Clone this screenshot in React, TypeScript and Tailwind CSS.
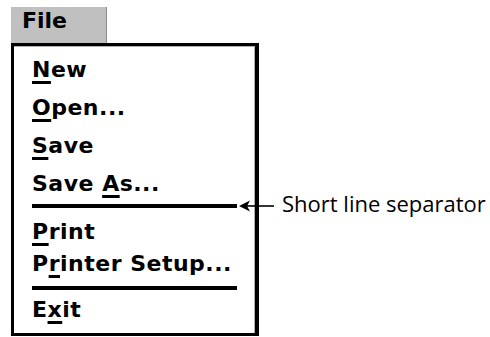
import * as React from "react";

// one menu row; `hot` is the index of the mnemonic letter
function Item({ label, hot, h = "h-[38px]" }: { label: string; hot: number; h?: string }) {
  return (
    <div className={`${h} flex items-center pl-[18px] whitespace-pre`}>
      {label.slice(0, hot)}
      <span className="underline decoration-[3px] underline-offset-[4px]">{label[hot]}</span>
      {label.slice(hot + 1)}
    </div>
  );
}

function Separator({ className = "" }: { className?: string }) {
  return <div className={`ml-[18px] h-[4px] w-[205px] bg-black ${className}`} />;
}

export default function App() {
  return (
    <div className="relative h-[337px] w-[490px] overflow-hidden bg-white text-black">
      {/* title tab */}
      <div
        className="ml-[11px] mt-[7px] h-[36px] w-[96px] border-r border-[#8a8a8a] bg-[#c0c0c0] pl-[11px] pt-[3px] text-[22px] font-bold leading-[22px]"
        style={{ fontFamily: '"DejaVu Sans", sans-serif' }}
      >
        File
      </div>

      {/* dropdown */}
      <div
        className="ml-[11px] flex h-[293px] w-[248px] flex-col border-[3px] border-r-[4px] border-black text-[22px] font-bold leading-none tracking-[0.5px] shadow-[inset_-1px_1px_0_#b0b0b0]"
        style={{ fontFamily: '"DejaVu Sans", sans-serif' }}
      >
        <div className="pt-[5px]">
          <Item label="New" hot={0} />
          <Item label="Open..." hot={0} />
          <Item label="Save" hot={0} />
          <Item label="Save As..." hot={5} />
        </div>
        <Separator className="mt-[1px]" />
        <div className="pt-[8px]">
          <Item label="Print" hot={0} h="h-[32px]" />
          <Item label="Printer Setup..." hot={1} h="h-[32px]" />
        </div>
        <Separator className="mt-[6px]" />
        <div className="pt-[4px]">
          <Item label="Exit" hot={1} h="h-[32px]" />
        </div>
      </div>

      {/* callout */}
      <svg className="absolute left-[238px] top-[198px]" width="40" height="16" viewBox="0 0 40 16">
        <path d="M1 8 L12 2.5 L9 8 L12 13.5 Z" fill="#000" />
        <line x1="9" y1="8" x2="36" y2="8" stroke="#000" strokeWidth="1.6" />
      </svg>
      <div
        className="absolute left-[282px] top-[192px] text-[22px] leading-[22px] whitespace-nowrap"
        style={{ fontFamily: '"Open Sans", sans-serif' }}
      >
        Short line separator
      </div>
    </div>
  );
}
